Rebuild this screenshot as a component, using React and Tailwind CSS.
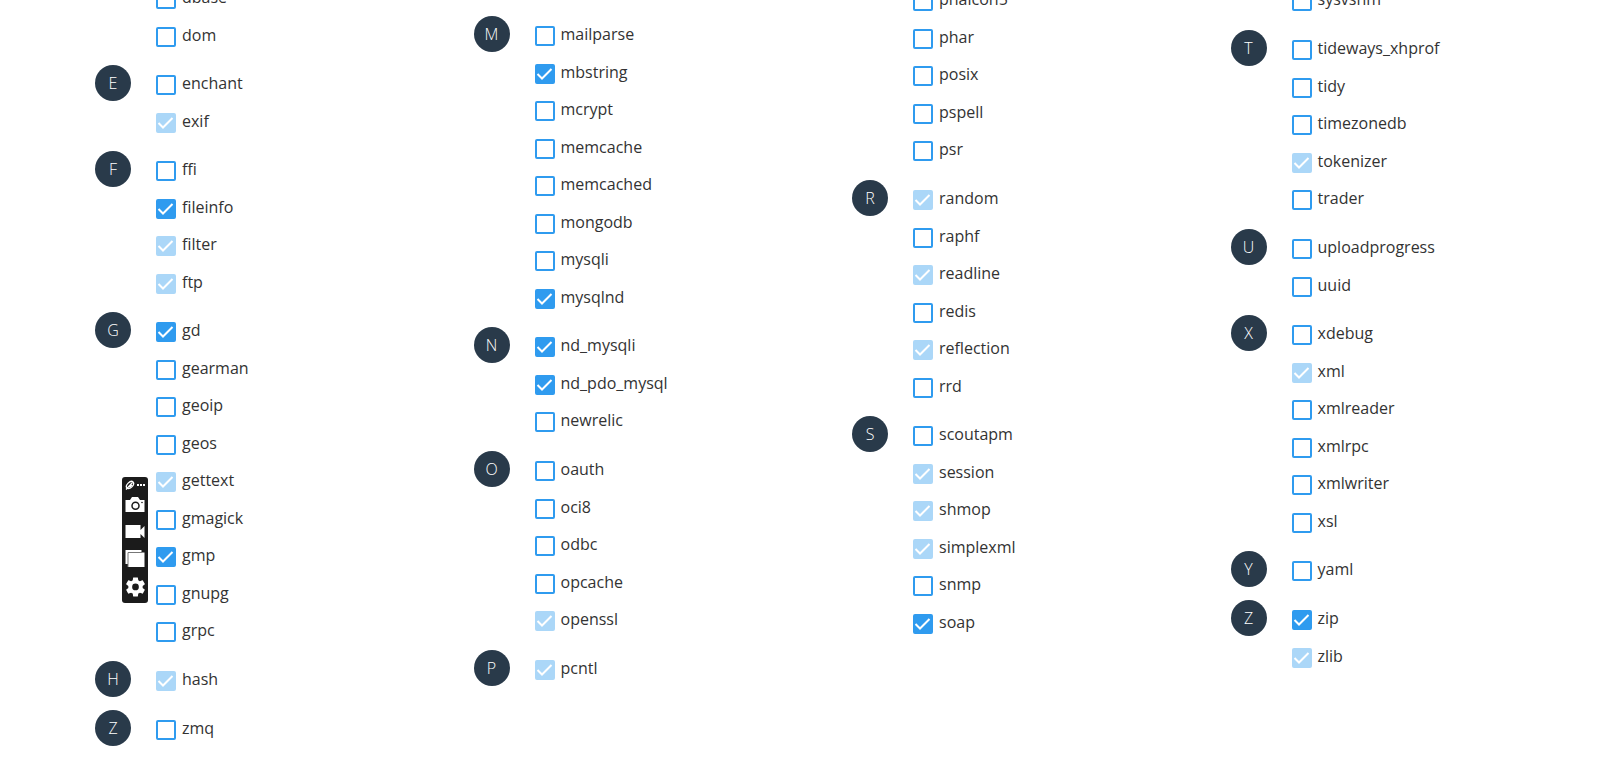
import React from "react";
import clsx from "clsx";

// "+" = enabled, "*" = built in (locked)
const COLUMNS = [
    {
        offset: "-mt-[21px]",
        groups: [
            { items: ["dbase", "dom"] },
            { letter: "E", items: ["enchant", "*exif"] },
            { letter: "F", items: ["ffi", "+fileinfo", "*filter", "*ftp"] },
            { letter: "G", items: ["+gd", "gearman", "geoip", "geos", "*gettext", "gmagick", "+gmp", "gnupg", "grpc"] },
            { letter: "H", items: ["*hash"] },
            { letter: "Z", items: ["zmq"] },
        ],
    },
    {
        offset: "mt-[16px]",
        groups: [
            { letter: "M", items: ["mailparse", "+mbstring", "mcrypt", "memcache", "memcached", "mongodb", "mysqli", "+mysqlnd"] },
            { letter: "N", items: ["+nd_mysqli", "+nd_pdo_mysql", "newrelic"] },
            { letter: "O", items: ["oauth", "oci8", "odbc", "opcache", "*openssl"] },
            { letter: "P", items: ["*pcntl"] },
        ],
    },
    {
        offset: "-mt-[19px]",
        groups: [
            { items: ["phalcon5", "phar", "posix", "pspell", "psr"] },
            { letter: "R", items: ["*random", "raphf", "*readline", "redis", "*reflection", "rrd"] },
            { letter: "S", items: ["scoutapm", "*session", "*shmop", "*simplexml", "snmp", "+soap"] },
        ],
    },
    {
        offset: "-mt-[19px]",
        groups: [
            { items: ["sysvshm"] },
            { letter: "T", items: ["tideways_xhprof", "tidy", "timezonedb", "*tokenizer", "trader"] },
            { letter: "U", items: ["uploadprogress", "uuid"] },
            { letter: "X", items: ["xdebug", "*xml", "xmlreader", "xmlrpc", "xmlwriter", "xsl"] },
            { letter: "Y", items: ["yaml"] },
            { letter: "Z", items: ["+zip", "*zlib"] },
        ],
    },
];

const Extension = ({ item }) => {
    const locked = item.startsWith("*");
    const enabled = item.startsWith("+");
    const name = item.replace(/^[*+]/, "");

    return (
        <li className="odd:h-[38px] even:h-[37px]">
            <label htmlFor={`ext-${name}`} className="inline-flex items-start gap-[6px]">
                <span className="mt-[9px] grid size-5">
                    <input
                        id={`ext-${name}`}
                        type="checkbox"
                        defaultChecked={locked || enabled}
                        disabled={locked}
                        className="peer col-start-1 row-start-1 size-5 appearance-none rounded-[2px] border-2 border-[#2f9bef] bg-white checked:bg-[#2f9bef] disabled:border-[#abd7f8] disabled:bg-[#abd7f8]"
                    />
                    <svg
                        viewBox="0 0 20 20"
                        className="invisible pointer-events-none col-start-1 row-start-1 size-5 peer-checked:visible"
                        fill="none"
                        stroke="#fff"
                        strokeWidth="2"
                    >
                        <path d="M2.5 10 7 14.500 16.500 5" />
                    </svg>
                </span>
                <span className="leading-[34px]">{name}</span>
            </label>
        </li>
    );
};

const Group = ({ letter, items }) => (
    <section className="mb-[10px] flex items-start gap-[25px]">
        <div
            className={clsx(
                "flex size-9 shrink-0 items-center justify-center rounded-full font-light text-white",
                letter && "bg-[#293a4a]"
            )}
        >
            {letter}
        </div>
        <ul className="pt-px">
            {items.map((item) => (
                <Extension key={item} item={item} />
            ))}
        </ul>
    </section>
);

// Floating capture tools, sits over the list
const CaptureBar = () => (
    <div className="absolute left-[122px] top-[477px] flex h-[126px] w-[26px] flex-col items-center rounded-[3px] bg-[#1b1b1b] text-white">
        <button aria-label="Menu" className="h-[16px]">
            <svg width="22" height="16" viewBox="0 0 22 16" fill="none" stroke="currentColor">
                <ellipse cx="6" cy="8" rx="4.300" ry="2.600" transform="rotate(-45 6 8)" strokeWidth="1.300" />
                <path d="M2 12.500 8.500 5.500M5.500 10.500 8 8" strokeWidth="1.300" />
                <path d="M13 8h2M16 8h2M19 8h2" strokeWidth="2" />
            </svg>
        </button>
        <button aria-label="Capture screenshot" className="h-[24px]">
            <svg width="20" height="24" viewBox="0 0 20 24">
                <path fill="currentColor" d="M.5 7H5l2-3h6l2 3h4.500v12H.5z" />
                <circle cx="10.500" cy="12.700" r="3.500" fill="none" stroke="#1b1b1b" strokeWidth="1.500" />
                <circle cx="17" cy="9.500" r=".8" fill="#1b1b1b" />
            </svg>
        </button>
        <button aria-label="Record video" className="h-[26px]">
            <svg width="20" height="26" viewBox="0 0 20 26" fill="currentColor">
                <path d="M.5 8H15.500v5L19.500 9V21L15.500 17v4H.5z" />
            </svg>
        </button>
        <button aria-label="Gallery" className="h-[26px]">
            <svg width="20" height="26" viewBox="0 0 20 26">
                <path fill="#fff" d="M.5 7h16v14H.5z" />
                <path fill="#fff" d="M3 9.500h16.500V24H3z" />
                <path fill="none" stroke="#777" d="M3 24V9.500H17" />
            </svg>
        </button>
        <button aria-label="Settings" className="h-[34px]">
            <svg width="23" height="34" viewBox="0 -6 24 34" fill="currentColor">
                <path d="M19.430 12.980c.040-.320.070-.640.070-.980s-.030-.660-.070-.980l2.110-1.650c.190-.150.240-.420.120-.640l-2-3.460c-.120-.220-.390-.300-.610-.220l-2.490 1c-.520-.400-1.080-.730-1.690-.980l-.380-2.650C14.460 2.180 14.250 2 14 2h-4c-.250 0-.460.180-.490.420l-.380 2.650c-.610.250-1.170.590-1.690.980l-2.490-1c-.230-.090-.490 0-.610.220l-2 3.460c-.130.220-.070.490.120.640l2.110 1.650c-.040.320-.070.650-.070.980s.030.660.070.980l-2.110 1.650c-.190.150-.240.420-.120.640l2 3.460c.120.220.390.300.610.220l2.490-1c.520.400 1.080.730 1.690.980l.380 2.650c.030.240.240.420.490.420h4c.250 0 .460-.180.490-.420l.380-2.650c.610-.250 1.170-.590 1.690-.980l2.490 1c.230.090.490 0 .610-.220l2-3.460c.120-.220.070-.490-.120-.640zM12 15.500a3.500 3.500 0 1 1 0-7 3.500 3.500 0 0 1 0 7z" />
            </svg>
        </button>
    </div>
);

export default function App() {
    return (
        <main className="relative overflow-hidden bg-white font-['Open_Sans',sans-serif] text-[16px] text-[#333]">
            <div className="grid grid-cols-4 pl-[95px] pr-[11px]">
                {COLUMNS.map(({ offset, groups }, i) => (
                    <div key={i} className={offset}>
                        {groups.map((group) => (
                            <Group key={group.items[0]} {...group} />
                        ))}
                    </div>
                ))}
            </div>
            <CaptureBar />
        </main>
    );
}
